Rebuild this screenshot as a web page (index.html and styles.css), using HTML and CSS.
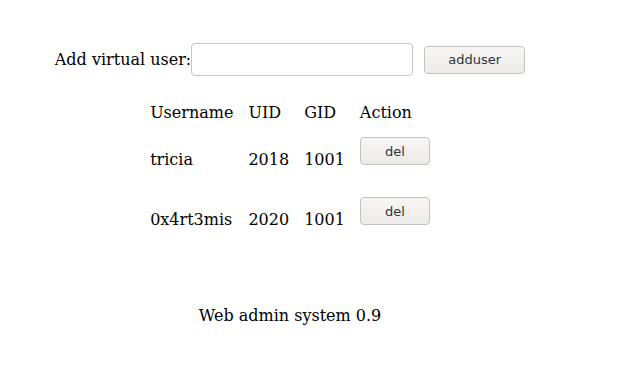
FILE: index.html
```html
<!DOCTYPE html>
<html lang="en">
<head>
    <meta charset="UTF-8">
    <title>Web admin system</title>
    <link rel="stylesheet" href="styles.css">
</head>
<body>

<div class="page">
    <form class="add-form">
        <label for="newUser">Add virtual user:</label>
        <input type="text" id="newUser" name="user">
        <button type="button" class="btn btn-add">adduser</button>
    </form>

    <table class="users">
        <tr class="head">
            <td>Username</td>
            <td>UID</td>
            <td>GID</td>
            <td>Action</td>
        </tr>
        <tr>
            <td>tricia</td>
            <td>2018</td>
            <td>1001</td>
            <td class="action"><button type="button" class="btn btn-del">del</button></td>
        </tr>
        <tr>
            <td>0x4rt3mis</td>
            <td>2020</td>
            <td>1001</td>
            <td class="action"><button type="button" class="btn btn-del">del</button></td>
        </tr>
    </table>

    <p class="footer">Web admin system 0.9</p>
</div>

</body>
</html>
```

FILE: styles.css
```css
body {
    margin: 0;
    background-color: #fff;
    color: #000;
    font-family: "DejaVu Serif", serif;
    font-size: 16px;
}
.page {
    width: 580px;
    padding-top: 43px;
    text-align: center;
}
.add-form {
    display: flex;
    justify-content: center;
    align-items: center;
    margin: 0;
}
.add-form input {
    width: 222px;
    height: 33px;
    box-sizing: border-box;
    border: 1px solid #c8c5c2;
    border-radius: 4px;
    background-color: #fff;
    padding: 0 6px;
    font-family: "DejaVu Sans", sans-serif;
    font-size: 13px;
}
.btn {
    height: 28px;
    box-sizing: border-box;
    border: 1px solid #c4c1bd;
    border-radius: 4px;
    background: linear-gradient(#f7f6f5, #edebe9);
    color: #2e3436;
    font-family: "DejaVu Sans", sans-serif;
    font-size: 13px;
    padding: 0 8px;
    cursor: pointer;
}
.btn:hover {
    background: #f9f9f8;
}
.btn-add {
    width: 101px;
    margin-left: 11px;
}
.btn-del {
    width: 70px;
    display: block;
    margin-bottom: 17px;
}
.users {
    margin: 12px auto 0;
    border-collapse: separate;
    border-spacing: 15px 15px;
    text-align: left;
}
.users td {
    padding: 0;
    vertical-align: middle;
    white-space: nowrap;
}
.users .head td {
    height: 19px;
    line-height: 19px;
}
.footer {
    margin: 49px 0 0;
}
```
